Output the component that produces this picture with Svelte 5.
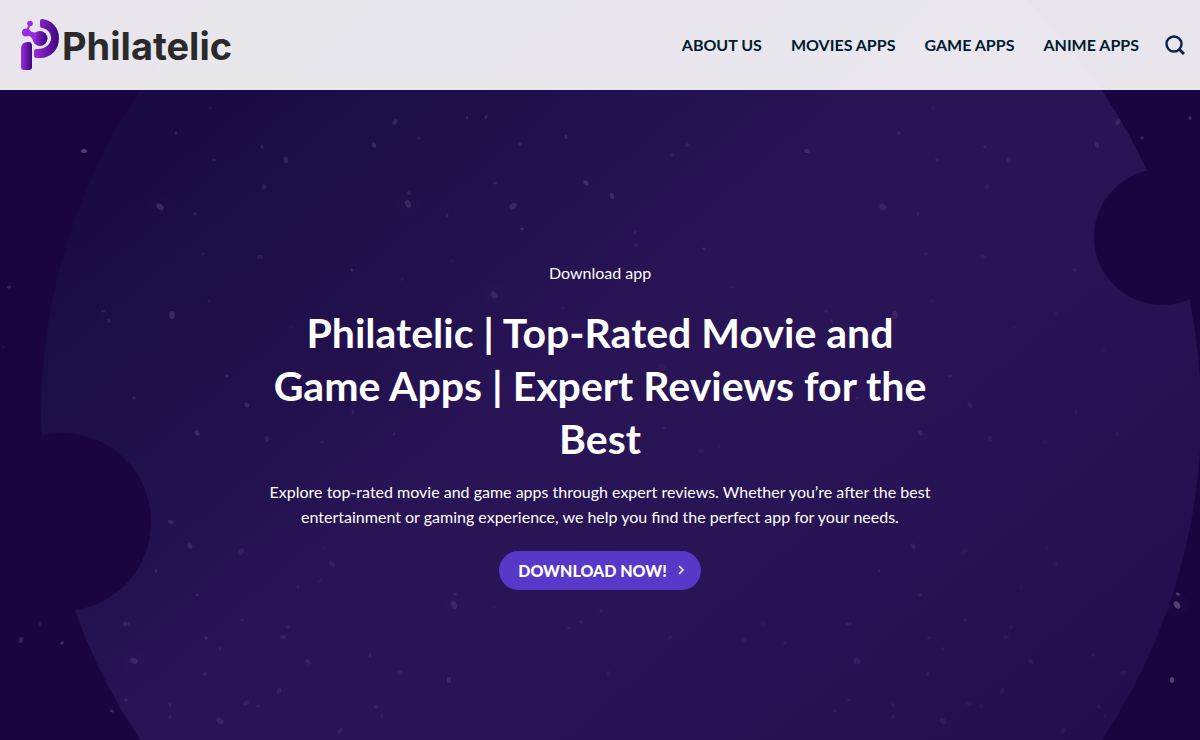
<script>
  const links = ['About us', 'Movies apps', 'Game apps', 'Anime apps'];

  // x, y, radius, opacity inside one tile of the sky
  const tile = 723;
  const stars = [
    [84, 151, 3, 0.4], [160, 207, 4, 0.32], [195, 214, 2, 0.28], [176, 133, 2, 0.22],
    [210, 108, 2, 0.12], [214, 160, 2, 0.22], [262, 147, 2, 0.3], [286, 160, 3, 0.3],
    [264, 187, 3, 0.2], [203, 254, 2, 0.2], [260, 257, 3, 0.2], [352, 270, 2, 0.35],
    [374, 145, 3, 0.35], [395, 122, 3, 0.35], [9, 287, 2, 0.22], [103, 311, 2, 0.25],
    [109, 321, 2, 0.3], [172, 315, 4, 0.35], [209, 301, 2, 0.15], [227, 376, 2, 0.3],
    [134, 398, 2, 0.25], [247, 405, 3, 0.32], [353, 412, 2, 0.3], [333, 313, 2, 0.15],
    [291, 327, 2, 0.1], [3, 347, 1, 0.15], [380, 350, 3, 0.1],
    [467, 118, 2, 0.3], [486, 117, 2, 0.35], [419, 138, 2, 0.2], [520, 144, 2, 0.28],
    [566, 137, 2, 0.38], [672, 155, 2, 0.22], [687, 145, 2, 0.32], [495, 183, 2, 0.28],
    [409, 193, 2, 0.3], [408, 204, 4, 0.35], [447, 215, 2, 0.25], [513, 206, 4, 0.32],
    [522, 229, 2, 0.35], [586, 183, 3, 0.4], [612, 196, 3, 0.38], [635, 233, 2, 0.3],
    [636, 245, 2, 0.25], [704, 249, 2, 0.35], [494, 295, 4, 0.32], [452, 261, 2, 0.1],
    [402, 279, 2, 0.15], [563, 308, 2, 0.12], [662, 367, 4, 0.15],
    [197, 433, 3, 0.4], [267, 439, 3, 0.25], [394, 434, 2, 0.25], [322, 442, 2, 0.15],
    [171, 522, 3, 0.3], [190, 546, 3, 0.35], [156, 571, 2, 0.35], [241, 552, 4, 0.2],
    [197, 595, 2, 0.3], [332, 564, 3, 0.25], [324, 548, 2, 0.12], [298, 587, 2, 0.15],
    [320, 581, 2, 0.12], [126, 624, 3, 0.32], [134, 661, 4, 0.35], [40, 624, 3, 0.12],
    [21, 640, 3, 0.22], [62, 643, 2, 0.3], [242, 620, 2, 0.28], [206, 638, 2, 0.32],
    [220, 649, 2, 0.22], [205, 674, 2, 0.32], [288, 627, 2, 0.22], [283, 637, 3, 0.28],
    [308, 662, 3, 0.28], [370, 655, 2, 0.32], [279, 691, 3, 0.28], [246, 703, 3, 0.24],
    [258, 706, 2, 0.18], [220, 721, 4, 0.32], [170, 705, 2, 0.3], [170, 717, 2, 0.25],
    [126, 700, 2, 0.32], [112, 711, 2, 0.28], [376, 707, 2, 0.28], [382, 716, 2, 0.24],
    [340, 731, 3, 0.26], [400, 673, 3, 0.25], [455, 594, 2, 0.4], [454, 605, 4, 0.42],
    [449, 680, 3, 0.42], [494, 607, 1, 0.25], [569, 628, 2, 0.25], [581, 622, 2, 0.25],
    [601, 611, 2, 0.3], [609, 674, 3, 0.16], [670, 638, 3, 0.16], [664, 428, 2, 0.26],
    [701, 451, 3, 0.22], [719, 447, 1, 0.2]
  ];
</script>

<svelte:head>
  <title>Philatelic</title>
</svelte:head>

<div class="page">
  <svg class="sky" viewBox="0 0 1200 740" preserveAspectRatio="xMidYMid slice" aria-hidden="true">
    <defs>
      <linearGradient id="planet" gradientUnits="userSpaceOnUse" x1="210" y1="100" x2="890" y2="900">
        <stop offset="0" stop-color="#18154a" stop-opacity="0.36" />
        <stop offset="0.1" stop-color="#1c1a4e" stop-opacity="0.42" />
        <stop offset="0.4" stop-color="#331e64" stop-opacity="0.58" />
        <stop offset="0.62" stop-color="#301c60" stop-opacity="0.66" />
        <stop offset="1" stop-color="#261152" stop-opacity="0.75" />
      </linearGradient>
      <g id="stars">
        {#each stars as [x, y, r, o], i}
          {#if r > 3}
            <circle cx={x} cy={y} r={r * 3} opacity={o / 20} />
          {/if}
          <ellipse cx={x} cy={y} rx={r} ry={r * 0.7} opacity={o} transform="rotate({i * 37} {x} {y})" />
        {/each}
      </g>
    </defs>
    <g fill="#a890b8">
      <use href="#stars" />
      <use href="#stars" x={tile} />
    </g>
    <circle cx="621" cy="415" r="580" fill="url(#planet)" />
    <circle cx="62" cy="522" r="89" fill="#1b0540" />
    <circle cx="1162" cy="237" r="68" fill="#1b0540" />
  </svg>

  <header>
    <a class="logo" href="/" aria-label="Philatelic">
      <svg width="42" height="54" viewBox="0 0 42 54" aria-hidden="true">
        <defs>
          <linearGradient id="bowl" x1="0" y1="0" x2="1" y2="0">
            <stop offset="0" stop-color="#9a2be0" />
            <stop offset="1" stop-color="#3c0678" />
          </linearGradient>
        </defs>
        <path d="M1 31Q1 24 8 24H9Q12 24 12 28V49Q12 52 9 52H4Q1 52 1 49z" fill="url(#bowl)" />
        <path
          d="M22 1C32 2 39 10 39 20C39 32 31 40 20 40H16Q14 40 14 37V33Q14 31 17 31C26 31 31 26 31 20C31 14 27 11 22 10Q20 10 20 8V3Q20 1 22 1z"
          fill="url(#bowl)"
        />
        <circle cx="20" cy="20.500" r="7.500" fill="url(#bowl)" />
        <g fill="#9a2bdc" stroke="#9a2bdc">
          <path d="M10 5L7 14" fill="none" stroke-width="2" />
          <path d="M4 17Q11 16 14 24L18 14Q12 16 9 11z" stroke="none" />
          <circle cx="10" cy="5.500" r="2.800" stroke="none" />
          <circle cx="6" cy="14.500" r="4" stroke="none" />
        </g>
      </svg>
      <span>Philatelic</span>
    </a>
    <nav>
      <div class="links">
        {#each links as link}
          <a href="#{link.toLowerCase().replace(' ', '-')}">{link}</a>
        {/each}
      </div>
      <button class="search" aria-label="Search">
        <svg width="20" height="20" viewBox="0 0 20 20" fill="none" stroke="#0a2050" aria-hidden="true">
          <circle cx="9" cy="9" r="7.500" stroke-width="2.400" />
          <path d="M14 14l5 5" stroke-width="3" />
        </svg>
      </button>
    </nav>
  </header>

  <main>
    <p>Download app</p>
    <h1>Philatelic | Top-Rated Movie and Game Apps | Expert Reviews for the Best</h1>
    <p>
      Explore top-rated movie and game apps through expert reviews. Whether you’re after the best
      entertainment or gaming experience, we help you find the perfect app for your needs.
    </p>
    <a class="download" href="#download">
      Download now!
      <svg width="8" height="12" viewBox="0 0 8 12" fill="none" stroke="#fff" stroke-width="1.600" aria-hidden="true">
        <path d="M2 2l4 4L2 10" />
      </svg>
    </a>
  </main>
</div>

<style>
  :global(body) {
    margin: 0;
    background: #1b0540;
  }

  .page {
    position: relative;
    display: flex;
    flex-direction: column;
    min-height: 100vh;
    overflow: hidden;
    font-family: Lato, sans-serif;
    font-size: 16px;
    line-height: 25px;
    color: #fff;
  }

  .sky {
    position: absolute;
    inset: 0;
    width: 100%;
    height: 100%;
  }

  header {
    position: relative;
    display: flex;
    align-items: center;
    justify-content: space-between;
    height: 90px;
    padding: 0 15px 0 20px;
    background: rgba(255, 255, 255, 0.9);
  }

  .logo {
    display: flex;
    align-items: center;
    color: #2a2a2c;
    text-decoration: none;
  }
  .logo span {
    padding-top: 2px;
    font: 700 38px/46px Inter, sans-serif;
  }

  nav {
    display: flex;
    align-items: center;
    gap: 26px;
  }
  .links {
    display: flex;
    gap: 29px;
  }
  .links a {
    color: #001a2e;
    font-weight: 700;
    line-height: 24px;
    text-transform: uppercase;
    text-decoration: none;
  }

  .search {
    display: flex;
    padding: 0;
    border: 0;
    background: none;
    cursor: pointer;
  }

  main {
    position: relative;
    flex: 1;
    display: flex;
    flex-direction: column;
    align-items: center;
    justify-content: center;
    box-sizing: border-box;
    width: 100%;
    max-width: 680px;
    margin: 0 auto;
    padding-top: 19px;
    text-align: center;
  }

  h1 {
    margin: 21px 0 14px;
    font-size: 41px;
    line-height: 53px;
  }

  p {
    margin: 0;
  }

  .download {
    display: flex;
    align-items: center;
    gap: 10px;
    margin-top: 22px;
    padding: 0 16px 0 19px;
    border-radius: 20px;
    background: #5738c8;
    color: #fff;
    font-weight: 900;
    line-height: 39px;
    text-transform: uppercase;
    text-decoration: none;
  }
</style>
